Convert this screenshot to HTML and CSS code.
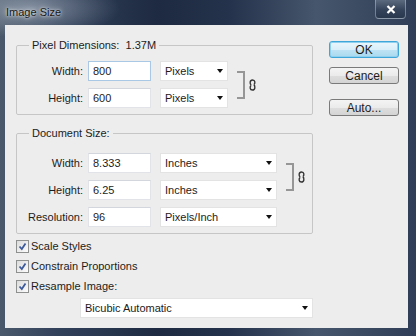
FILE: index.html
```html
<!DOCTYPE html>
<html lang="en">
<head>
  <meta charset="UTF-8" />
  <title>Image Size</title>
  <link rel="stylesheet" href="styles.css">
</head>
<body>
  <div class="window">
    <div class="titlebar">
      <span class="title">Image Size</span>
      <span class="close">
        <svg width="10" height="9" viewBox="0 0 10 9"><path d="M1.5 1 L8.5 8 M8.5 1 L1.5 8" stroke="#fff" stroke-width="2.2"/></svg>
      </span>
    </div>
    <div class="client">
      <div class="main">
        <fieldset class="group pixels">
          <legend>Pixel Dimensions:&nbsp; 1.37M</legend>
          <div class="rows">
            <label>Width:</label>
            <input class="field focused" value="800">
            <div class="dropdown short"><span>Pixels</span><i class="arrow"></i></div>
            <div class="link">
              <div class="bracket"></div>
              <svg class="chain" width="7" height="12" viewBox="0 0 7 12"><path d="M2.2 6 C0.6 5.2 0.6 1 3.5 1 C6.4 1 6.4 4.6 4.8 5.6 M4.8 6 C6.4 6.8 6.4 11 3.5 11 C0.6 11 0.6 7.4 2.2 6.4" fill="none" stroke="#333" stroke-width="1.4"/></svg>
            </div>
            <label>Height:</label>
            <input class="field" value="600">
            <div class="dropdown short"><span>Pixels</span><i class="arrow"></i></div>
          </div>
        </fieldset>

        <fieldset class="group docsize">
          <legend>Document Size:</legend>
          <div class="rows">
            <label>Width:</label>
            <input class="field" value="8.333">
            <div class="dropdown long"><span>Inches</span><i class="arrow"></i></div>
            <div class="link">
              <div class="bracket"></div>
              <svg class="chain" width="7" height="12" viewBox="0 0 7 12"><path d="M2.2 6 C0.6 5.2 0.6 1 3.5 1 C6.4 1 6.4 4.6 4.8 5.6 M4.8 6 C6.4 6.8 6.4 11 3.5 11 C0.6 11 0.6 7.4 2.2 6.4" fill="none" stroke="#333" stroke-width="1.4"/></svg>
            </div>
            <label>Height:</label>
            <input class="field" value="6.25">
            <div class="dropdown long"><span>Inches</span><i class="arrow"></i></div>
            <label>Resolution:</label>
            <input class="field" value="96">
            <div class="dropdown long"><span>Pixels/Inch</span><i class="arrow"></i></div>
          </div>
        </fieldset>

        <div class="options">
          <label class="check"><span class="box"><svg width="9" height="9" viewBox="0 0 9 9"><path d="M1.5 4.5 L3.8 7 L7.5 1.5" fill="none" stroke="#3d5a9a" stroke-width="1.8"/></svg></span>Scale Styles</label>
          <label class="check"><span class="box"><svg width="9" height="9" viewBox="0 0 9 9"><path d="M1.5 4.5 L3.8 7 L7.5 1.5" fill="none" stroke="#3d5a9a" stroke-width="1.8"/></svg></span>Constrain Proportions</label>
          <label class="check"><span class="box"><svg width="9" height="9" viewBox="0 0 9 9"><path d="M1.5 4.5 L3.8 7 L7.5 1.5" fill="none" stroke="#3d5a9a" stroke-width="1.8"/></svg></span>Resample Image:</label>
          <div class="dropdown method"><span>Bicubic Automatic</span><i class="arrow"></i></div>
        </div>
      </div>

      <div class="buttons">
        <button class="btn default">OK</button>
        <button class="btn cancel">Cancel</button>
        <button class="btn auto">Auto...</button>
      </div>
    </div>
  </div>
</body>
</html>
```

FILE: styles.css
```css
body {
  margin: 0;
  font-family: "Liberation Sans", Arial, sans-serif;
  font-size: 11px;
  color: #1c1c1c;
}
.window {
  width: 416px;
  height: 336px;
  box-sizing: border-box;
  padding: 0 8px 8px 5px;
  display: flex;
  flex-direction: column;
  background:
    radial-gradient(ellipse 90px 30px at 30px 8px, rgba(190,200,212,0.55), transparent),
    linear-gradient(90deg, #4a596b 0%, #32415a 14%, #1d2a41 38%, #24324b 55%, #46566c 76%, #2f3e56 100%);
}
.titlebar {
  height: 25px;
  display: flex;
  justify-content: space-between;
  align-items: flex-start;
}
.title {
  margin-top: 6px;
  margin-left: 1px;
  color: #151515;
  text-shadow: 0 0 5px rgba(255,255,255,0.9), 0 0 2px rgba(255,255,255,0.7);
}
.close {
  width: 31px;
  height: 19px;
  box-sizing: border-box;
  margin-right: 2px;
  display: flex;
  align-items: center;
  justify-content: center;
  border: 1px solid rgba(200,210,225,0.45);
  border-top: none;
  border-radius: 0 0 4px 4px;
  background: linear-gradient(#5b6a7e, #34435a 55%, #2a384e);
}
.client {
  flex: 1;
  display: flex;
  align-items: flex-start;
  background: #ededed;
  padding: 13px 0 0 11px;
}
.main {
  width: 297px;
}
.group {
  margin: 0;
  padding: 0 0 6px;
  border: 1px solid #c6c6c6;
  border-radius: 2px;
}
.group legend {
  margin-left: 12px;
  padding: 0 3px;
  line-height: 14px;
}
.docsize {
  margin-top: 11px;
}
.rows {
  display: grid;
  grid-template-columns: 71px 72px auto 1fr;
  grid-auto-rows: 20px;
  row-gap: 7px;
  align-items: center;
}
.pixels .rows {
  margin-top: 9px;
}
.docsize .rows {
  margin-top: 13px;
}
.rows label {
  text-align: right;
  padding-right: 5px;
}
.field {
  width: 63px;
  height: 20px;
  box-sizing: border-box;
  border: 1px solid #e1e3e8;
  border-top-color: #d3d6dc;
  padding: 0 4px;
  margin: 0;
  font: inherit;
  color: inherit;
  background: #fff;
}
.field.focused {
  border-color: #a9c8e6;
}
.dropdown {
  height: 20px;
  box-sizing: border-box;
  background: #fff;
  border: 1px solid #e3e3e3;
  display: flex;
  align-items: center;
  justify-content: space-between;
  padding: 0 4px;
}
.dropdown.short {
  width: 68px;
}
.dropdown.long {
  width: 117px;
}
.arrow {
  width: 0;
  height: 0;
  border-left: 3.5px solid transparent;
  border-right: 3.5px solid transparent;
  border-top: 4px solid #111;
}
.link {
  grid-column: 4;
  grid-row: 1 / span 2;
  align-self: stretch;
  display: flex;
  align-items: center;
  margin-left: 9px;
}
.bracket {
  width: 8px;
  height: 28px;
  box-sizing: border-box;
  border: 2px solid #969696;
  border-left: none;
}
.chain {
  margin-left: 4px;
}
.options {
  margin-top: 2px;
}
.check {
  display: flex;
  align-items: center;
  height: 20px;
}
.box {
  width: 13px;
  height: 13px;
  box-sizing: border-box;
  margin-right: 2px;
  border: 1px solid #8e8f8f;
  background: linear-gradient(135deg, #dcdcdc, #fdfdfd);
  display: flex;
  align-items: center;
  justify-content: center;
}
.dropdown.method {
  width: 233px;
  margin: 2px 0 0 64px;
}
.buttons {
  margin-left: 16px;
  padding-top: 3px;
  display: flex;
  flex-direction: column;
}
.btn {
  width: 70px;
  height: 17px;
  padding: 0;
  font: inherit;
  font-size: 12px;
  color: #1c1c1c;
  border: 1px solid #7a7a7a;
  border-radius: 3px;
  background: linear-gradient(#f4f4f4, #ebebeb 50%, #dedede 51%, #d4d4d4);
}
.btn.default {
  border-color: #3ea6d8;
  background: linear-gradient(#ebf6fc, #d9eff9 50%, #bfe3f4 51%, #a9d9ef);
  box-shadow: inset 0 0 0 1px #8fd0ee;
}
.btn.cancel {
  margin-top: 9px;
}
.btn.auto {
  margin-top: 15px;
}
```
